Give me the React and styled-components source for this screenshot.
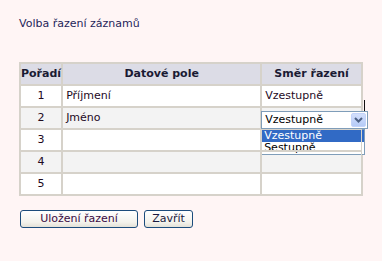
import React from 'react';
import styled, { createGlobalStyle } from 'styled-components';

const GlobalStyle = createGlobalStyle`
  html, body {
    margin: 0;
    padding: 0;
    background: #fff5f5;
  }
  body {
    font-family: "DejaVu Sans", Verdana, sans-serif;
    font-size: 11px;
  }
`;

const Page = styled.div`
  padding: 17px 19px;
`;

const Title = styled.div`
  color: #1f1f5a;
  line-height: 13px;
  margin-bottom: 32px;
`;

const Table = styled.table`
  border: 1px solid #d6d2ca;
  border-spacing: 0;
  border-collapse: separate;
`;

const HeadCell = styled.th`
  background: #dcdce6;
  border: 1px solid #d6d2ca;
  height: 20px;
  padding: 0 ${p => (p.$tight ? 0 : 3)}px;
  width: ${p => p.$w}px;
  font-weight: bold;
  color: #1a1a33;
  text-align: center;
  line-height: 20px;
  white-space: nowrap;
`;

const Row = styled.tr`
  background: ${p => (p.$even ? '#f3f3f3' : '#ffffff')};
`;

const Cell = styled.td`
  border: 1px solid #d6d2ca;
  height: 20px;
  padding: 0 ${p => (p.$center ? 0 : 3)}px;
  text-align: ${p => (p.$center ? 'center' : 'left')};
  color: #1e0a1e;
  line-height: 20px;
  position: relative;
  white-space: nowrap;
`;

const SelectBox = styled.div`
  position: absolute;
  top: 3px;
  left: -1px;
  width: 102px;
  height: 16px;
  border: 1px solid #7f9db9;
  background: #fff;
  color: #000;
  line-height: 16px;
  padding-left: 3px;
  box-sizing: content-box;
`;

const ArrowBtn = styled.div`
  position: absolute;
  top: 1px;
  right: 1px;
  width: 15px;
  height: 14px;
  border-radius: 2px;
  background: linear-gradient(#d3dffc, #b6cbf7);
  border: 1px solid #c3d3fa;
  box-sizing: border-box;
  display: flex;
  align-items: center;
  justify-content: center;
`;

const Edge = styled.div`
  position: absolute;
  top: -8px;
  right: -4px;
  width: 1px;
  height: 11px;
  background: #111;
`;

const List = styled.div`
  position: absolute;
  top: 21px;
  left: -1px;
  width: 102px;
  border: 1px solid #7f9db9;
  background: #fff;
  padding: 0;
`;

const Option = styled.div`
  height: 12px;
  line-height: 12px;
  padding-left: 2px;
  background: ${p => (p.$active ? '#316ac5' : 'transparent')};
  color: ${p => (p.$active ? '#fff' : '#000')};
`;

const Buttons = styled.div`
  display: flex;
  gap: 6px;
  margin-top: 14px;
  padding-left: 1px;
`;

const Button = styled.button`
  font-family: "DejaVu Sans", Verdana, sans-serif;
  font-size: 11px;
  height: 18px;
  width: ${p => p.$w}px;
  padding: 0;
  border: 1px solid #1c4c7c;
  border-radius: 3px;
  background: linear-gradient(#ffffff, #f3f2ec 70%, #e3e1d7);
  color: ${p => p.$color || '#1a1a40'};
  line-height: 16px;
`;

const rows = [
  { n: 1, field: 'Příjmení', dir: 'Vzestupně' },
  { n: 2, field: 'Jméno', select: true },
  { n: 3 },
  { n: 4 },
  { n: 5 },
];

export default function App() {
  return (
    <>
      <GlobalStyle />
      <Page>
        <Title>Volba řazení záznamů</Title>
        <Table>
          <thead>
            <tr>
              <HeadCell $tight $w={38}>Pořadí</HeadCell>
              <HeadCell $w={192}>Datové pole</HeadCell>
              <HeadCell $w={93}>Směr řazení</HeadCell>
            </tr>
          </thead>
          <tbody>
            {rows.map((r, i) => (
              <Row key={r.n} $even={i % 2 === 1}>
                <Cell $center>{r.n}</Cell>
                <Cell>{r.field}</Cell>
                <Cell>
                  {r.dir}
                  {r.select && (
                    <>
                      <Edge />
                      <SelectBox>
                        Vzestupně
                        <ArrowBtn>
                          <svg width="9" height="6" viewBox="0 0 9 6">
                            <path d="M1 1 L4.5 4.5 L8 1" fill="none" stroke="#4d6185" strokeWidth="2" />
                          </svg>
                        </ArrowBtn>
                      </SelectBox>
                      <List>
                        <Option $active>Vzestupně</Option>
                        <Option>Sestupně</Option>
                      </List>
                    </>
                  )}
                </Cell>
              </Row>
            ))}
          </tbody>
        </Table>
        <Buttons>
          <Button $w={118} $color="#3a0a44">Uložení řazení</Button>
          <Button $w={49}>Zavřít</Button>
        </Buttons>
      </Page>
    </>
  );
}
